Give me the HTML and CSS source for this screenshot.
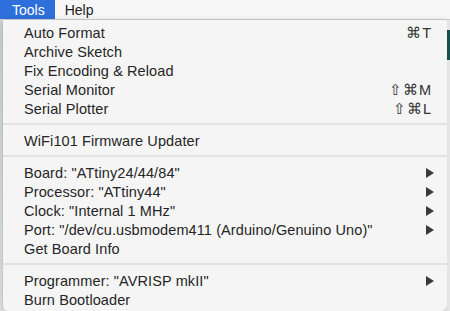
FILE: index.html
```html
<!DOCTYPE html>
<html lang="en">
<head>
    <meta charset="UTF-8">
    <title>Tools menu</title>
    <link rel="stylesheet" href="styles.css">
</head>
<body>
    <div class="menubar">
        <span class="menubar-item active">Tools</span>
        <span class="menubar-item">Help</span>
    </div>

    <div class="stage">
        <div class="edge edge-left"></div>

        <ul class="menu">
            <li class="item"><span>Auto Format</span><span class="key">⌘T</span></li>
            <li class="item"><span>Archive Sketch</span></li>
            <li class="item"><span>Fix Encoding &amp; Reload</span></li>
            <li class="item"><span>Serial Monitor</span><span class="key">⇧⌘M</span></li>
            <li class="item"><span>Serial Plotter</span><span class="key">⇧⌘L</span></li>
            <li class="sep"></li>
            <li class="item"><span>WiFi101 Firmware Updater</span></li>
            <li class="sep"></li>
            <li class="item"><span>Board: "ATtiny24/44/84"</span><span class="arrow"></span></li>
            <li class="item"><span>Processor: "ATtiny44"</span><span class="arrow"></span></li>
            <li class="item"><span>Clock: "Internal 1 MHz"</span><span class="arrow"></span></li>
            <li class="item"><span>Port: "/dev/cu.usbmodem411 (Arduino/Genuino Uno)"</span><span class="arrow"></span></li>
            <li class="item"><span>Get Board Info</span></li>
            <li class="sep"></li>
            <li class="item"><span>Programmer: "AVRISP mkII"</span><span class="arrow"></span></li>
            <li class="item"><span>Burn Bootloader</span></li>
        </ul>

        <div class="edge edge-right"></div>
    </div>
</body>
</html>
```

FILE: styles.css
```css
body {
    margin: 0;
    padding: 0;
    font-family: 'Liberation Sans', Arial, sans-serif;
    background-color: #f4f4f4;
    color: #262626;
    width: 450px;
    height: 311px;
    overflow: hidden;
}

/* barra de menus */
.menubar {
    height: 20px;
    display: flex;
    background-color: #f6f6f6;
    border-bottom: 1px solid #cfcfcf;
    box-sizing: border-box;
}

.menubar-item {
    font-size: 14px;
    line-height: 20px;
    padding: 0 10px;
    color: #222;
}

.menubar-item.active {
    background-color: #2e6fdc;
    color: #fff;
    padding: 0 10px 0 12px;
}

.stage {
    display: flex;
    height: 291px;
}

.edge {
    width: 3px;
}

.edge-left {
    background: linear-gradient(to bottom, #cfd6d6 0, #e2e6e6 100%);
}

.edge-right {
    background: linear-gradient(to bottom, #e4e4e4 0, #e4e4e4 10px, #14514f 10px, #14514f 40px, #e4e4e4 40px);
}

/* menu desplegable */
.menu {
    flex: 1;
    list-style: none;
    margin: 0;
    padding: 3px 0 0;
    background-color: #f5f5f5;
    border-radius: 0 0 6px 6px;
    box-shadow: 0 2px 6px rgba(0, 0, 0, 0.25);
}

.item {
    display: flex;
    justify-content: space-between;
    align-items: center;
    height: 19px;
    padding: 0 13px 0 21px;
    font-size: 14.5px;
    letter-spacing: 0.1px;
}

.key {
    color: #333;
    letter-spacing: 1px;
    margin-right: 2px;
}

.arrow {
    width: 0;
    height: 0;
    border-top: 5px solid transparent;
    border-bottom: 5px solid transparent;
    border-left: 8px solid #3a3a3a;
}

.sep {
    height: 2px;
    background-color: #e2e2e2;
    margin: 5px 0 6px;
}
```
